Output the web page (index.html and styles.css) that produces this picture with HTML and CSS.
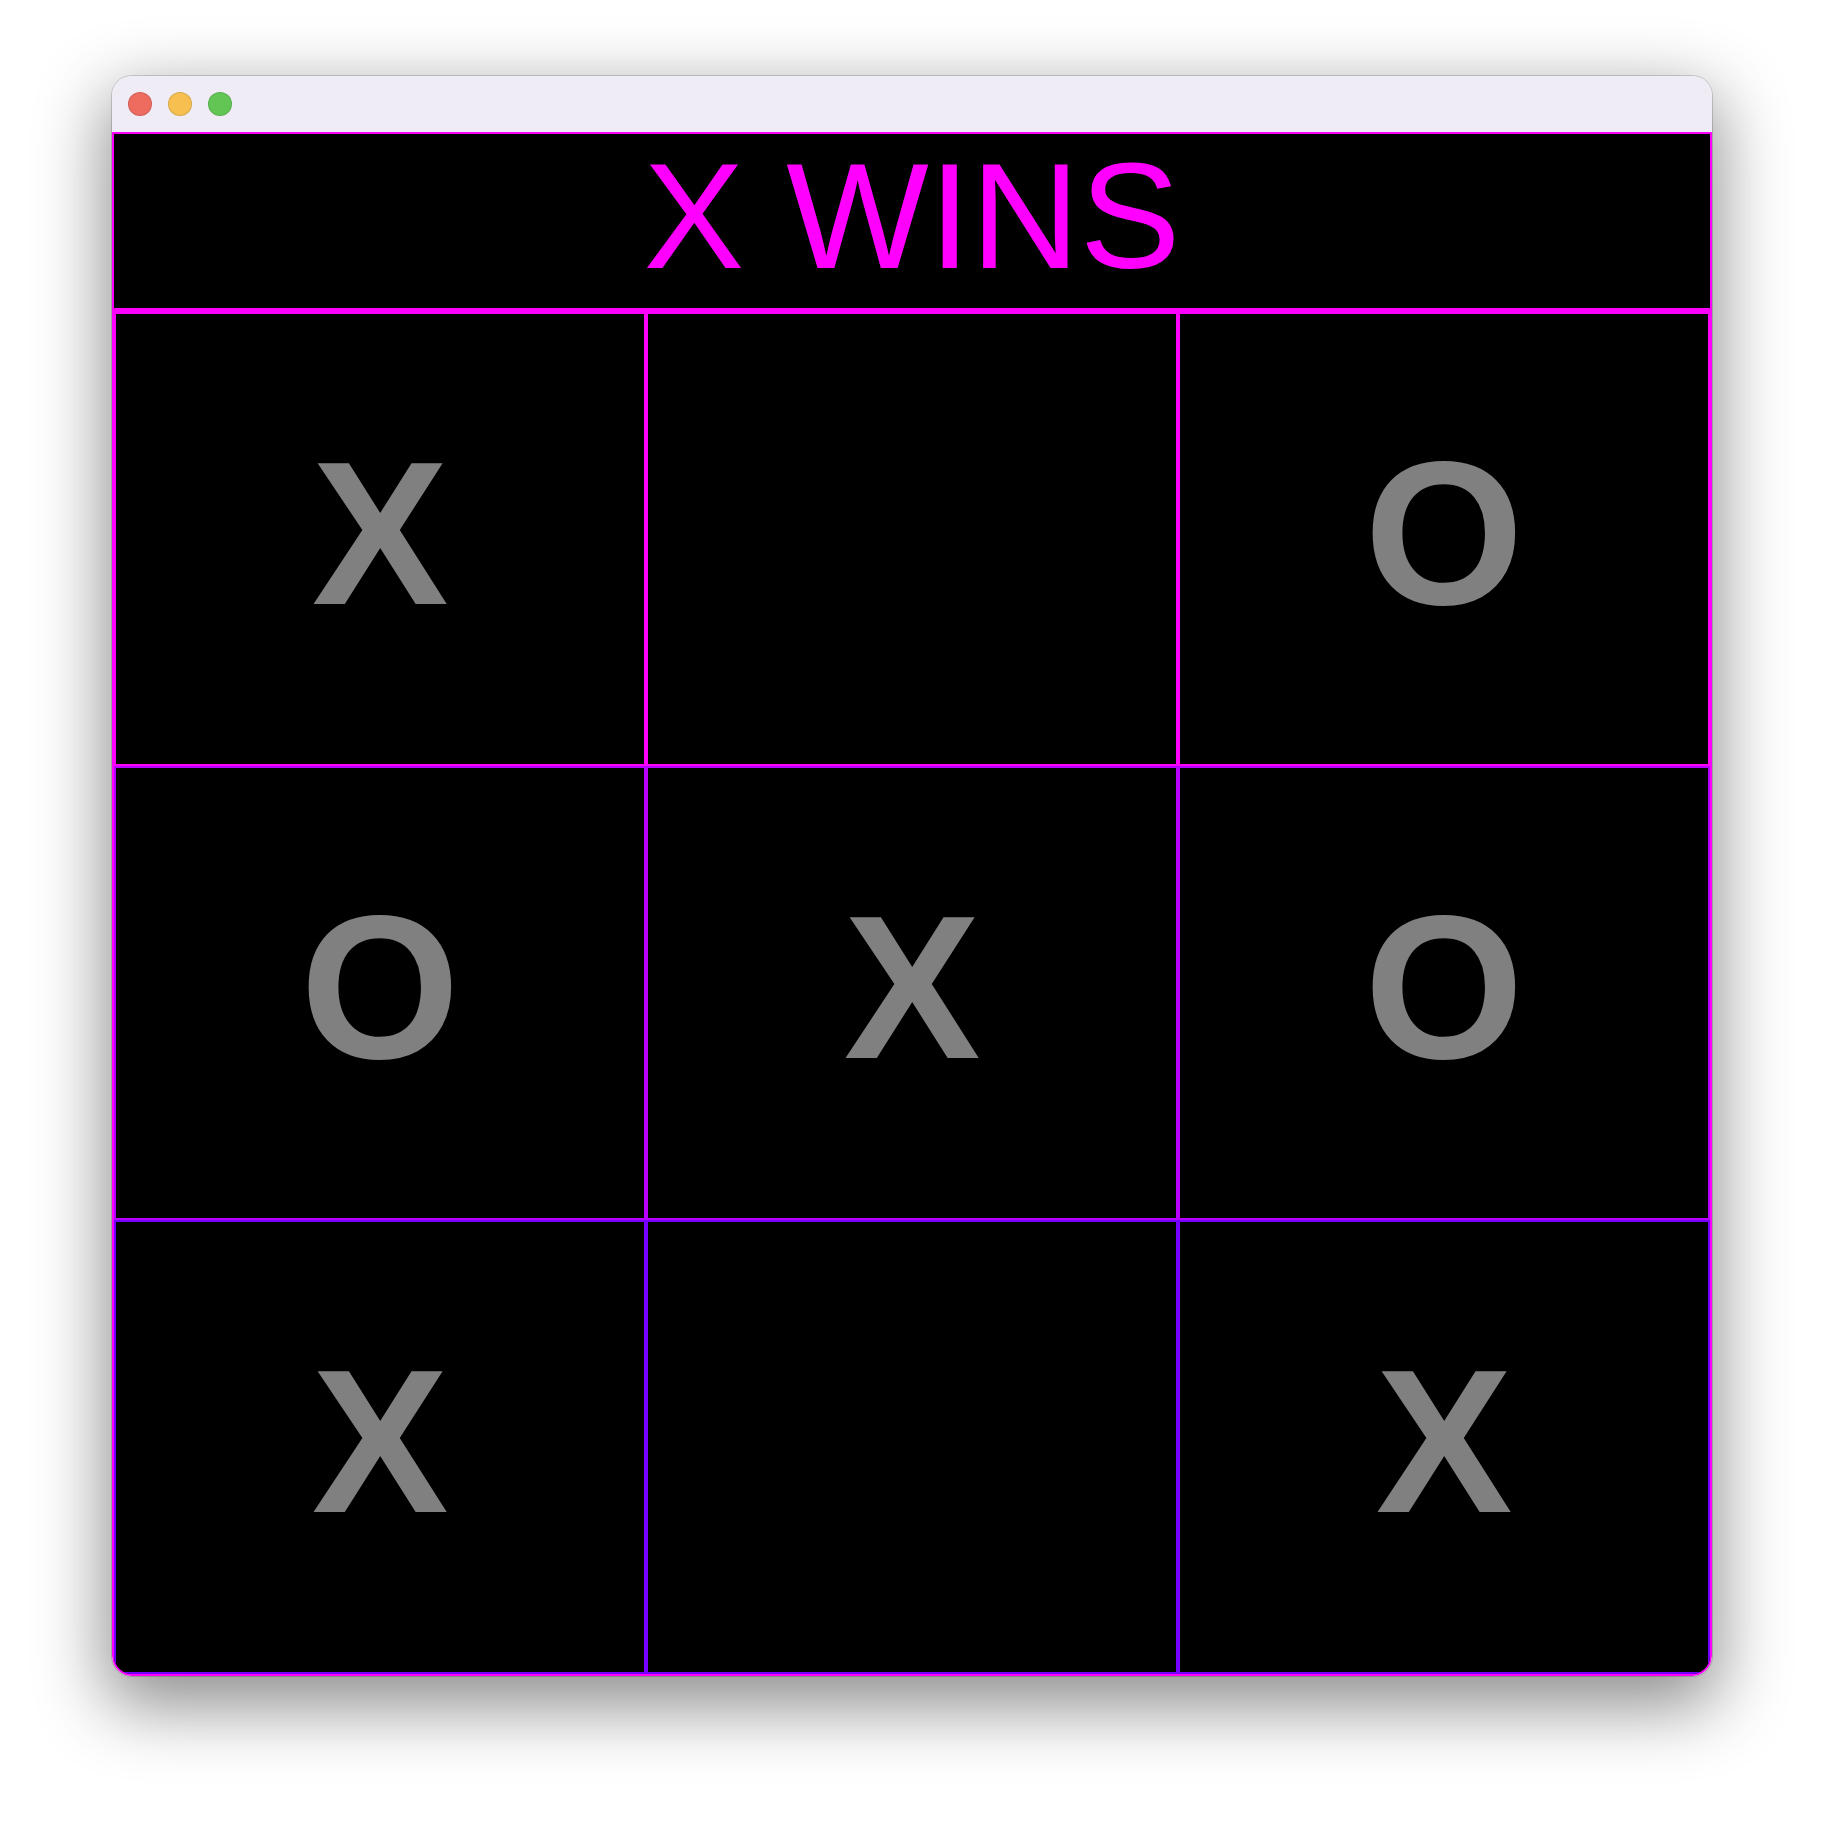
FILE: index.html
```html
<!DOCTYPE html>
<html lang="en">
<head>
<meta charset="utf-8">
<title>Tic Tac Toe</title>
<link rel="stylesheet" href="styles.css">
</head>
<body>
<div class="page">
  <div class="window">
    <div class="titlebar">
      <span class="light red"></span>
      <span class="light yellow"></span>
      <span class="light green"></span>
    </div>
    <div class="app">
      <header class="status">X WINS</header>
      <div class="board">
        <div class="cell row1">X</div>
        <div class="cell row1"></div>
        <div class="cell row1">O</div>
        <div class="cell row2">O</div>
        <div class="cell row2">X</div>
        <div class="cell row2">O</div>
        <div class="cell row3">X</div>
        <div class="cell row3"></div>
        <div class="cell row3">X</div>
      </div>
    </div>
  </div>
</div>
</body>
</html>
```
FILE: styles.css
```css
html, body {
  margin: 0;
  padding: 0;
  background: #ffffff;
}

body {
  font-family: "Liberation Sans", Arial, sans-serif;
}

.page {
  display: flex;
  justify-content: center;
  padding-top: 76px;
  height: 1824px;
  box-sizing: border-box;
}

.window {
  width: 1600px;
  height: 1600px;
  border-radius: 20px;
  overflow: hidden;
  display: flex;
  flex-direction: column;
  box-shadow: 0 0 0 1px rgba(0, 0, 0, 0.16), 0 24px 70px 6px rgba(0, 0, 0, 0.45);
}

.titlebar {
  height: 56px;
  flex: none;
  background: #efecf6;
  display: flex;
  align-items: center;
  gap: 16px;
  padding-left: 16px;
}

.light {
  width: 24px;
  height: 24px;
  border-radius: 50%;
  box-sizing: border-box;
  border: 1px solid rgba(0, 0, 0, 0.12);
}

.red { background: #ee6b60; }
.yellow { background: #f6bf4f; }
.green { background: #62c655; }

.app {
  flex: 1;
  background: #000;
  border: 2px solid #ff00ff;
  border-radius: 0 0 20px 20px;
  overflow: hidden;
  display: flex;
  flex-direction: column;
}

.status {
  height: 178px;
  flex: none;
  box-sizing: border-box;
  padding-bottom: 10px;
  border-bottom: 4px solid #ff00ff;
  display: flex;
  align-items: center;
  justify-content: center;
  color: #ff00ff;
  font-size: 151px;
}

.board {
  display: grid;
  grid-template-columns: repeat(3, 1fr);
  grid-template-rows: repeat(3, 454px);
}

.cell {
  border: 2px solid #ff00ff;
  padding-bottom: 12px;
  display: flex;
  align-items: center;
  justify-content: center;
  color: #808080;
  font-weight: bold;
  font-size: 205px;
}

.row1 { border-color: #ff00ff; }
.row2 { border-color: #b800ff; }
.row3 { border-color: #7600ff; }
```
